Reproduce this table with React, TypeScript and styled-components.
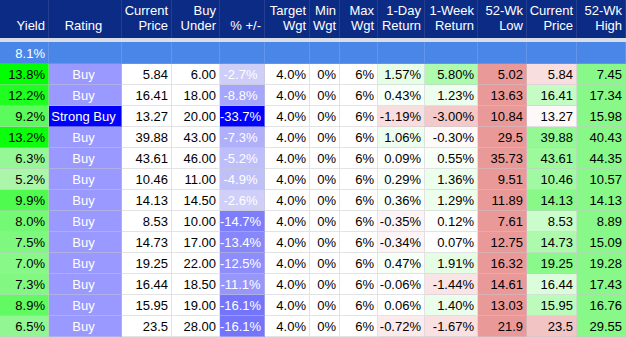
import React from "react";
import styled, {createGlobalStyle} from "styled-components";

const GlobalStyle = createGlobalStyle`
  body {
    margin: 0;
    background: #ffffff;
    font-family: "Liberation Sans", Arial, sans-serif;
  }
`;

const COLUMNS = "49px 73px 50px 48px 45px 45px 30px 38px 47px 53px 49px 50px 49px";

type Align = "left" | "center" | "right";

const Sheet = styled.div`
  width: 626px;
  font-size: 13px;
  color: #000000;
`;

const HeaderRow = styled.div`
  display: grid;
  grid-template-columns: ${COLUMNS};
  height: 38px;
  background: #0c2b85;
`;

const HeadCell = styled.div<{ $align?: Align }>`
  box-sizing: border-box;
  display: flex;
  flex-direction: column;
  justify-content: flex-end;
  align-items: ${p => p.$align === "center" ? "center" : "flex-end"};
  text-align: ${p => p.$align || "right"};
  padding: 0 3px 5px 0;
  border-right: 1px solid #243f8e;
  color: #ffffff;
  line-height: 15px;
  white-space: nowrap;
`;

const FrozenBand = styled.div`
  height: 4px;
  background: #d9dde5;
`;

const Row = styled.div<{ $height: number }>`
  display: grid;
  grid-template-columns: ${COLUMNS};
  height: ${p => p.$height}px;
`;

const Cell = styled.div<{ $bg?: string; $align?: Align; $light?: boolean }>`
  box-sizing: border-box;
  display: flex;
  align-items: center;
  justify-content: ${p => p.$align === "center" ? "center" : p.$align === "left" ? "flex-start" : "flex-end"};
  padding: 1px 3px 0 0;
  background: ${p => p.$bg || "#ffffff"};
  color: ${p => p.$light ? "#ffffff" : "#000000"};
  border-right: 1px solid rgba(200, 200, 205, 0.5);
  border-bottom: 1px solid rgba(200, 200, 205, 0.5);
  white-space: nowrap;
  line-height: 19px;
`;

const AverageCell = styled(Cell)`
  background: #4a86e8;
  color: #ffffff;
  border-right: 1px solid rgba(120, 160, 230, 0.6);
  border-bottom: 1px solid rgba(120, 160, 230, 0.6);
`;

interface IHolding {
    yld: number;
    rating: string;
    price: number;
    buyUnder: string;
    diff: number;
    day: number;
    week: number;
    low: string;
    priceText: string;
    high: string;
}

const holdings: IHolding[] = [
    {yld: 13.8, rating: "Buy", price: 5.84, priceText: "5.84", buyUnder: "6.00", diff: -2.7, day: 1.57, week: 5.80, low: "5.02", high: "7.45"},
    {yld: 12.2, rating: "Buy", price: 16.41, priceText: "16.41", buyUnder: "18.00", diff: -8.8, day: 0.43, week: 1.23, low: "13.63", high: "17.34"},
    {yld: 9.2, rating: "Strong Buy", price: 13.27, priceText: "13.27", buyUnder: "20.00", diff: -33.7, day: -1.19, week: -3.00, low: "10.84", high: "15.98"},
    {yld: 13.2, rating: "Buy", price: 39.88, priceText: "39.88", buyUnder: "43.00", diff: -7.3, day: 1.06, week: -0.30, low: "29.5", high: "40.43"},
    {yld: 6.3, rating: "Buy", price: 43.61, priceText: "43.61", buyUnder: "46.00", diff: -5.2, day: 0.09, week: 0.55, low: "35.73", high: "44.35"},
    {yld: 5.2, rating: "Buy", price: 10.46, priceText: "10.46", buyUnder: "11.00", diff: -4.9, day: 0.29, week: 1.36, low: "9.51", high: "10.57"},
    {yld: 9.9, rating: "Buy", price: 14.13, priceText: "14.13", buyUnder: "14.50", diff: -2.6, day: 0.36, week: 1.29, low: "11.89", high: "14.13"},
    {yld: 8.0, rating: "Buy", price: 8.53, priceText: "8.53", buyUnder: "10.00", diff: -14.7, day: -0.35, week: 0.12, low: "7.61", high: "8.89"},
    {yld: 7.5, rating: "Buy", price: 14.73, priceText: "14.73", buyUnder: "17.00", diff: -13.4, day: -0.34, week: 0.07, low: "12.75", high: "15.09"},
    {yld: 7.0, rating: "Buy", price: 19.25, priceText: "19.25", buyUnder: "22.00", diff: -12.5, day: 0.47, week: 1.91, low: "16.32", high: "19.28"},
    {yld: 7.3, rating: "Buy", price: 16.44, priceText: "16.44", buyUnder: "18.50", diff: -11.1, day: -0.06, week: -1.44, low: "14.61", high: "17.43"},
    {yld: 8.9, rating: "Buy", price: 15.95, priceText: "15.95", buyUnder: "19.00", diff: -16.1, day: 0.06, week: 1.40, low: "13.03", high: "16.76"},
    {yld: 6.5, rating: "Buy", price: 23.5, priceText: "23.5", buyUnder: "28.00", diff: -16.1, day: -0.72, week: -1.67, low: "21.9", high: "29.55"},
];

type RGB = [number, number, number];
const WHITE: RGB = [255, 255, 255];

function mix(a: RGB, b: RGB, t: number) {
    const k = Math.max(0, Math.min(1, t));
    const c = a.map((v, i) => Math.round(v + (b[i] - v) * k));
    return `rgb(${c[0]}, ${c[1]}, ${c[2]})`;
}

// conditional formatting, same scales as the sheet
const yieldColor = (v: number) => mix([172, 246, 172], [0, 255, 0], (v - 5.2) / (13.8 - 5.2));
const diffColor = (v: number) => mix([207, 207, 249], [0, 0, 255], (Math.abs(v) - 2.6) / (33.7 - 2.6));

function returnColor(v: number, greenStep: number, redStep: number) {
    if (v >= 0) {
        return mix(WHITE, [0, 240, 0], (v * greenStep) / 255);
    }
    return mix(WHITE, [200, 0, 0], (-v * redStep) / 255);
}

function rangeColor(price: number, low: number, high: number) {
    const p = (price - low) / (high - low);
    if (p >= 0.5) return mix(WHITE, [136, 248, 136], (p - 0.5) / 0.5);
    return mix(WHITE, [234, 153, 153], (0.5 - p) / 0.5);
}

const fmt = (v: number, digits: number) => `${v.toFixed(digits)}%`;

const headers: { label: string[]; align?: Align }[] = [
    {label: ["Yield"]},
    {label: ["Rating"], align: "center"},
    {label: ["Current", "Price"]},
    {label: ["Buy", "Under"]},
    {label: ["% +/-"]},
    {label: ["Target", "Wgt"]},
    {label: ["Min", "Wgt"]},
    {label: ["Max", "Wgt"]},
    {label: ["1-Day", "Return"]},
    {label: ["1-Week", "Return"]},
    {label: ["52-Wk", "Low"]},
    {label: ["Current", "Price"]},
    {label: ["52-Wk", "High"]},
];

function HoldingRow(props: { item: IHolding }) {
    const {item} = props;
    const strong = item.rating === "Strong Buy";
    return (
        <Row $height={21}>
            <Cell $bg={yieldColor(item.yld)}>{fmt(item.yld, 1)}</Cell>
            <Cell $align="center" $light $bg={strong ? "#0000ff" : "#9999ff"}>{item.rating}</Cell>
            <Cell>{item.priceText}</Cell>
            <Cell>{item.buyUnder}</Cell>
            <Cell $align="center" $light $bg={diffColor(item.diff)}>{fmt(item.diff, 1)}</Cell>
            <Cell>4.0%</Cell>
            <Cell>0%</Cell>
            <Cell>6%</Cell>
            <Cell $bg={returnColor(item.day, 16, 28)}>{fmt(item.day, 2)}</Cell>
            <Cell $bg={returnColor(item.week, 14, 18)}>{fmt(item.week, 2)}</Cell>
            <Cell $bg="#ea9999">{item.low}</Cell>
            <Cell $bg={rangeColor(item.price, parseFloat(item.low), parseFloat(item.high))}>{item.priceText}</Cell>
            <Cell $bg="#88f888">{item.high}</Cell>
        </Row>
    );
}

function App() {
    return (
        <Sheet>
            <GlobalStyle/>
            <HeaderRow>
                {headers.map((h, i) => (
                    <HeadCell key={i} $align={h.align}>
                        {h.label.map(line => <span key={line}>{line}</span>)}
                    </HeadCell>
                ))}
            </HeaderRow>
            <FrozenBand/>
            <Row $height={22}>
                <AverageCell>8.1%</AverageCell>
                {headers.slice(1).map((_, i) => <AverageCell key={i}/>)}
            </Row>
            {holdings.map((item, i) => <HoldingRow key={i} item={item}/>)}
        </Sheet>
    );
}

export default App;
